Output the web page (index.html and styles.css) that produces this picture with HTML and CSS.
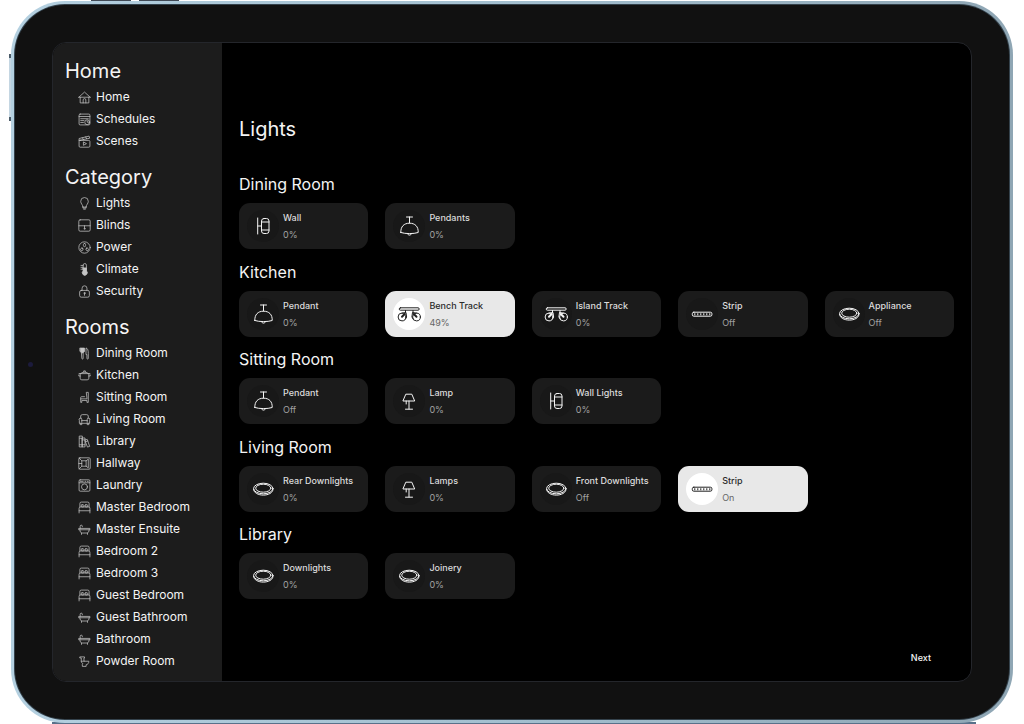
FILE: index.html
```html
<!DOCTYPE html>
<html lang="en">
<head>
<meta charset="utf-8">
<title>Lights</title>
<link rel="stylesheet" href="styles.css">
</head>
<body>
<svg class="sprite" aria-hidden="true">
  <symbol id="home" viewBox="0 0 24 24"><path d="M1.500 11.500 12 2l10.500 9.500M4 11.500V22h16V11.500M1.500 11.500h21M9.500 22v-5.500a2.500 2.500 0 0 1 5 0V22"/></symbol>
  <symbol id="schedules" viewBox="0 0 24 24"><rect x="2" y="2" width="20" height="20" rx="2"/><path d="M2 6.500h20M5 10.500h14M5 14h6M5 17.500h5"/><circle cx="17" cy="17" r="4.500"/><path d="M17 14.500V17h2.500"/></symbol>
  <symbol id="scenes" viewBox="0 0 24 24"><rect x="2" y="10" width="20" height="12.500" rx="2"/><path d="M2 10V6.500L20.500 2l1 4L2 10M8 5l2 3.300M14 3.500l2 3.400M10 13.500v5.500l5-2.700z"/></symbol>
  <symbol id="bulb" viewBox="0 0 24 24"><path d="M9 18c0-4-4-5.500-4-10a7 7 0 0 1 14 0c0 4.500-4 6-4 10zM9 18v2.500h6V18M10.500 22.500h3"/></symbol>
  <symbol id="blinds" viewBox="0 0 24 24"><rect x="1.500" y="1.500" width="21" height="21" rx="2.500"/><path d="M1.500 12.500h21M12 12.500V17"/><circle cx="12" cy="18" r="1"/></symbol>
  <symbol id="power" viewBox="0 0 24 24"><circle cx="12" cy="12" r="10.500"/><rect x="10" y="4.500" width="4" height="6" rx="2"/><rect x="5" y="13" width="4" height="5" rx="1.500" transform="rotate(30 7 15.500)"/><rect x="15" y="13" width="4" height="5" rx="1.500" transform="rotate(-30 17 15.500)"/></symbol>
  <symbol id="climate" viewBox="0 0 24 24"><path d="M9.500 14V4a3 3 0 0 1 6 0v10M5.500 4.500h4M5.500 8h4M5.500 11.500h4"/><path class="solid" d="M9.500 9h6v5.500a4.600 4.600 0 1 1-6 0z"/></symbol>
  <symbol id="lock" viewBox="0 0 24 24"><rect x="3" y="10" width="18" height="12.500" rx="3"/><path d="M7.500 10V6a4.500 4.500 0 0 1 9 0v4M12 16v3"/><circle cx="12" cy="15" r="1.200"/></symbol>
  <symbol id="dining" viewBox="0 0 24 24"><path class="solid" d="M4 2h8v6.500l-2.500 2h-3L4 8.500z"/><path d="M7 10.500h2.500V21a1.200 1.200 0 0 1-2.500 0zM15.500 2c2.500 1 3.500 4 3.500 10v9a1.200 1.200 0 0 1-2.500 0v-7h-1z"/></symbol>
  <symbol id="kitchen" viewBox="0 0 24 24"><path d="M2 8.500h20M4 8.500V17a3 3 0 0 0 3 3h10a3 3 0 0 0 3-3V8.500M5 8.500C6 5 18 5 19 8.500M10.500 5.500V3.500h3v2M4 13H1.500v-2M20 13h2.500v-2"/></symbol>
  <symbol id="sitting" viewBox="0 0 24 24"><path d="M16 2.500h3V21h-2.500v-3.500H7V21H5v-6.500h11zM5 14.500V12a1.500 1.500 0 0 1 1.500-1.500H12"/></symbol>
  <symbol id="living" viewBox="0 0 24 24"><path d="M5 9V5.500A3 3 0 0 1 8 3h8a3 3 0 0 1 3 2.500V9M7 17v-5a2.500 2.500 0 1 0-4.500 1.500V19h19v-5.500A2.500 2.500 0 1 0 17 12v5M7 14h10M4 19v2.500h3V19M17 19v2.500h3V19"/></symbol>
  <symbol id="library" viewBox="0 0 24 24"><path d="M3 2h5v20H3zM8 5.500h5V22H8zM3 6h5M3 18h5M8 9h5M8 18h5M13 9.500l4-1.500 4.500 13-4 1.300L13 11M14 12.500l4-1.500"/></symbol>
  <symbol id="hallway" viewBox="0 0 24 24"><rect x="1.500" y="1.500" width="21" height="21" rx="2"/><path d="M2 2l5 5v10l-5 5M7 7h8v10H7M15 7l4-3v16l-4-3M1.500 12H7"/></symbol>
  <symbol id="laundry" viewBox="0 0 24 24"><rect x="2" y="1.500" width="20" height="21" rx="2"/><path d="M2 7h20M4.500 4.300h5M13 4.300h1M17 4.300h2"/><circle cx="12" cy="14.500" r="5.500"/></symbol>
  <symbol id="bed" viewBox="0 0 24 24"><path d="M3.500 11V4.500A2.500 2.500 0 0 1 6 2h12a2.500 2.500 0 0 1 2.500 2.500V11M2 22v-8.500A2.500 2.500 0 0 1 4.500 11h15a2.500 2.500 0 0 1 2.500 2.500V22M2 18h20"/><rect x="6" y="7" width="5" height="4" rx="1.500"/><rect x="13" y="7" width="5" height="4" rx="1.500"/></symbol>
  <symbol id="bath" viewBox="0 0 24 24"><path d="M2 10h20v2.500H2zM3.500 12.500c0 4 1.500 6 4 6h9c2.500 0 4-2 4-6M4 10V6a2 2 0 0 1 4 0v1M6.500 18.500V21M17.500 18.500V21"/></symbol>
  <symbol id="toilet" viewBox="0 0 24 24"><path d="M4 3.500h8v2h-1v6h9c0 4-2 6-5 6.500V21H8v-3.500L9 16c-2-1-3-3-3-5V5.500H4zM6 11.500h5"/></symbol>

  <symbol id="wall" viewBox="0 0 32 32"><path d="M10.700 8v16M10.700 16h3.300M14.500 12h7.500M14.500 20h7.500"/><rect x="14.500" y="8.500" width="7.500" height="15" rx="2.500"/></symbol>
  <symbol id="pendant" viewBox="0 0 32 32"><path d="M13.500 7h6M16.500 7v6M7.800 22.500C7.500 16.500 11 13.200 16.500 13.200s9 3.300 8.700 9.300c-4.500 1.500-13 1.500-17.400 0zM14.500 23.700c.5 2 3.500 2 4 0"/></symbol>
  <symbol id="track" viewBox="0 0 32 32"><rect x="6.200" y="9.800" width="20" height="2.400" rx="1.200"/><path d="M12.500 12.500v2.300M20 12.500v2.300"/><circle cx="9" cy="19" r="3.900"/><circle cx="23.500" cy="19" r="3.900"/><path d="M9 15.100l4-.6.600 4.500-1.200 2M23.500 15.100l-4-.6-.6 4.500 1.200 2"/><path class="bold" d="M9 18.800l2.700-2.800M23.500 18.800l-2.700-2.800"/></symbol>
  <symbol id="strip" viewBox="0 0 32 32"><rect x="6.300" y="14.200" width="19.600" height="4" rx="1.500"/><path class="dots" d="M8.300 16.200h16"/></symbol>
  <symbol id="downlight" viewBox="0 0 32 32"><ellipse cx="16.300" cy="15.500" rx="9.700" ry="5.300"/><ellipse cx="16.300" cy="15.200" rx="7.600" ry="4"/><path d="M6.600 16.200c0 8 19.400 8 19.400 0"/></symbol>
  <symbol id="lamp" viewBox="0 0 32 32"><path d="M13.200 9.200h5.600l2.900 6.800H10.300zM16 16v8M12.500 24.200h7M13.200 16v3"/></symbol>
</svg>

<div class="stage">
<div class="device">
<div class="bezel">
<span class="camera"></span>
<div class="screen">
  <nav class="sidebar" aria-label="Main">
    <section>
      <h2>Home</h2>
      <ul>
        <li><a href="#"><svg><use href="#home"/></svg>Home</a></li>
        <li><a href="#"><svg><use href="#schedules"/></svg>Schedules</a></li>
        <li><a href="#"><svg><use href="#scenes"/></svg>Scenes</a></li>
      </ul>
    </section>
    <section>
      <h2>Category</h2>
      <ul>
        <li><a href="#"><svg><use href="#bulb"/></svg>Lights</a></li>
        <li><a href="#"><svg><use href="#blinds"/></svg>Blinds</a></li>
        <li><a href="#"><svg><use href="#power"/></svg>Power</a></li>
        <li><a href="#"><svg><use href="#climate"/></svg>Climate</a></li>
        <li><a href="#"><svg><use href="#lock"/></svg>Security</a></li>
      </ul>
    </section>
    <section>
      <h2>Rooms</h2>
      <ul>
        <li><a href="#"><svg><use href="#dining"/></svg>Dining Room</a></li>
        <li><a href="#"><svg><use href="#kitchen"/></svg>Kitchen</a></li>
        <li><a href="#"><svg><use href="#sitting"/></svg>Sitting Room</a></li>
        <li><a href="#"><svg><use href="#living"/></svg>Living Room</a></li>
        <li><a href="#"><svg><use href="#library"/></svg>Library</a></li>
        <li><a href="#"><svg><use href="#hallway"/></svg>Hallway</a></li>
        <li><a href="#"><svg><use href="#laundry"/></svg>Laundry</a></li>
        <li><a href="#"><svg><use href="#bed"/></svg>Master Bedroom</a></li>
        <li><a href="#"><svg><use href="#bath"/></svg>Master Ensuite</a></li>
        <li><a href="#"><svg><use href="#bed"/></svg>Bedroom 2</a></li>
        <li><a href="#"><svg><use href="#bed"/></svg>Bedroom 3</a></li>
        <li><a href="#"><svg><use href="#bed"/></svg>Guest Bedroom</a></li>
        <li><a href="#"><svg><use href="#bath"/></svg>Guest Bathroom</a></li>
        <li><a href="#"><svg><use href="#bath"/></svg>Bathroom</a></li>
        <li><a href="#"><svg><use href="#toilet"/></svg>Powder Room</a></li>
      </ul>
    </section>
  </nav>

  <main class="main">
    <h1>Lights</h1>
    <div class="rooms">
      <section>
        <h3>Dining Room</h3>
        <div class="cards">
          <button class="card"><svg><use href="#wall"/></svg><span class="text"><span>Wall</span><span class="state">0%</span></span></button>
          <button class="card"><svg><use href="#pendant"/></svg><span class="text"><span>Pendants</span><span class="state">0%</span></span></button>
        </div>
      </section>
      <section>
        <h3>Kitchen</h3>
        <div class="cards">
          <button class="card"><svg><use href="#pendant"/></svg><span class="text"><span>Pendant</span><span class="state">0%</span></span></button>
          <button class="card on"><svg><use href="#track"/></svg><span class="text"><span>Bench Track</span><span class="state">49%</span></span></button>
          <button class="card"><svg><use href="#track"/></svg><span class="text"><span>Island Track</span><span class="state">0%</span></span></button>
          <button class="card"><svg><use href="#strip"/></svg><span class="text"><span>Strip</span><span class="state">Off</span></span></button>
          <button class="card"><svg><use href="#downlight"/></svg><span class="text"><span>Appliance</span><span class="state">Off</span></span></button>
        </div>
      </section>
      <section>
        <h3>Sitting Room</h3>
        <div class="cards">
          <button class="card"><svg><use href="#pendant"/></svg><span class="text"><span>Pendant</span><span class="state">Off</span></span></button>
          <button class="card"><svg><use href="#lamp"/></svg><span class="text"><span>Lamp</span><span class="state">0%</span></span></button>
          <button class="card"><svg><use href="#wall"/></svg><span class="text"><span>Wall Lights</span><span class="state">0%</span></span></button>
        </div>
      </section>
      <section>
        <h3>Living Room</h3>
        <div class="cards">
          <button class="card"><svg><use href="#downlight"/></svg><span class="text"><span>Rear Downlights</span><span class="state">0%</span></span></button>
          <button class="card"><svg><use href="#lamp"/></svg><span class="text"><span>Lamps</span><span class="state">0%</span></span></button>
          <button class="card"><svg><use href="#downlight"/></svg><span class="text"><span>Front Downlights</span><span class="state">Off</span></span></button>
          <button class="card on"><svg><use href="#strip"/></svg><span class="text"><span>Strip</span><span class="state">On</span></span></button>
        </div>
      </section>
      <section>
        <h3>Library</h3>
        <div class="cards">
          <button class="card"><svg><use href="#downlight"/></svg><span class="text"><span>Downlights</span><span class="state">0%</span></span></button>
          <button class="card"><svg><use href="#downlight"/></svg><span class="text"><span>Joinery</span><span class="state">0%</span></span></button>
        </div>
      </section>
    </div>
    <button class="next">Next</button>
  </main>
</div>
</div>
</div>
</div>
</body>
</html>
```
FILE: styles.css
```css
* { box-sizing: border-box; }

body {
  margin: 0;
  background: #fff;
  color: #f4f4f4;
  font-family: Inter, "Liberation Sans", sans-serif;
}

h1, h2, h3, ul { margin: 0; padding: 0; font-weight: 400; }
ul { list-style: none; }
button { border: 0; font: inherit; color: inherit; cursor: pointer; }
a { color: inherit; text-decoration: none; }

svg {
  fill: none;
  stroke: currentColor;
  stroke-linecap: round;
  stroke-linejoin: round;
}

.sprite { position: absolute; width: 0; height: 0; }
.solid { fill: currentColor; }
.bold { stroke-width: 2; }
.dots { stroke-width: 2; stroke-dasharray: 1 2; stroke-linecap: butt; }

/* Tablet body with its hardware buttons and stand */
.stage {
  position: relative;
  display: flex;
  min-height: 100vh;
  padding: 1px 11px;
}

.stage::before {
  content: "";
  position: absolute;
  top: 0;
  left: 91px;
  width: 88px;
  height: 2px;
  background: linear-gradient(90deg, #414a56 40px, transparent 40px 48px, #414a56 48px);
}

.stage::after {
  content: "";
  position: absolute;
  bottom: 0;
  left: 52px;
  right: 48px;
  height: 2px;
  background: #58718a;
}

.device {
  position: relative;
  z-index: 1;
  flex: 1;
  display: flex;
  padding: 4px;
  border-radius: 54px;
  background: linear-gradient(90deg, #b4d0e0, #a3bfcf 50%, #8fa6b4);
}

.device::before {
  content: "";
  position: absolute;
  left: -2px;
  top: 53px;
  width: 2px;
  height: 67px;
  background: linear-gradient(#4b5b68 4px, #c4d6e2 4px 63px, #4b5b68 63px);
}

.bezel {
  position: relative;
  flex: 1;
  display: flex;
  padding: 37px;
  border-radius: 50px;
  background: #111;
  box-shadow: 0 0 0 1px #34424c;
}

.camera {
  position: absolute;
  left: 13px;
  top: 50%;
  width: 5px;
  height: 5px;
  border-radius: 50%;
  background: #1c1b3c;
}

.screen {
  flex: 1;
  display: grid;
  grid-template-columns: 169px 1fr;
  overflow: hidden;
  border: 1px solid #24262b;
  border-radius: 14px;
  background: #000;
}

.sidebar {
  display: flex;
  flex-direction: column;
  gap: 10px;
  padding: 13px 0 0 12px;
  background: #1c1c1c;
}

.sidebar h2 { font-size: 20px; line-height: 30px; }

.sidebar a {
  display: flex;
  align-items: center;
  gap: 5px;
  padding-left: 13px;
  font-size: 12px;
  line-height: 22px;
  white-space: nowrap;
}

.sidebar svg { width: 13px; height: 13px; stroke-width: 1.4; color: #c4c4c4; }

.main {
  display: flex;
  flex-direction: column;
  padding: 72px 17px 13px;
}

h1 { font-size: 20px; line-height: 28px; }
h3 { font-size: 16px; line-height: 24px; }

.rooms {
  flex: 1;
  display: flex;
  flex-direction: column;
  justify-content: space-between;
  gap: 8px;
  margin: 29px 0 49px;
}

.cards {
  display: grid;
  grid-template-columns: repeat(5, 1fr);
  gap: 17px;
  margin-top: 7px;
}

.card {
  display: flex;
  align-items: center;
  gap: 4px;
  height: 46px;
  padding: 0 0 0 8px;
  border-radius: 11px;
  background: #1b1b1b;
  text-align: left;
}

.card svg {
  flex: none;
  width: 32px;
  height: 32px;
  border-radius: 50%;
  background: #181818;
  stroke-width: 1;
}

.text {
  display: flex;
  flex-direction: column;
  color: #dcdcdc;
  font-size: 9px;
  font-weight: 500;
  line-height: 17px;
  white-space: nowrap;
}

.state { color: #a2a2a2; font-weight: 400; }

.on { background: #e8e8e8; }
.on svg { background: #fff; color: #222; }
.on .text { color: #2a2a2a; }
.on .state { color: #666; }

.next {
  align-self: flex-end;
  margin-right: 18px;
  padding: 0 5px;
  background: none;
  font-size: 9px;
  font-weight: 500;
  line-height: 20px;
}
```
